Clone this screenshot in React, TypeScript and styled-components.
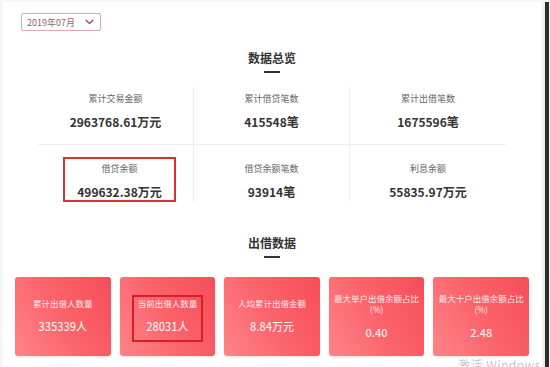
import React from 'react';
import styled, { createGlobalStyle } from 'styled-components';

const GlobalStyle = createGlobalStyle`
  html, body {
    margin: 0;
    padding: 0;
    background: #f6f6f6;
    font-family: "Noto Sans CJK SC", "Noto Sans", sans-serif;
  }
`;

const Page = styled.div`
  display: flex;
  width: 550px;
  height: 367px;
  overflow: hidden;
  position: relative;
  padding-top: 2px;
  box-sizing: border-box;
`;

const Main = styled.div`
  margin-left: 3px;
  width: 538px;
  background: #fff;
  padding: 11px 12px 0;
  box-sizing: border-box;
  display: flex;
  flex-direction: column;
`;

const Shade = styled.div`
  width: 4px;
  background: linear-gradient(90deg, #fafafa, #e6e6e6);
`;

const Edge = styled.div`
  width: 4px;
  background: #2c2c2c;
`;

const Select = styled.div`
  margin-left: 6px;
  width: 80px;
  height: 18px;
  box-sizing: border-box;
  border: 1px solid #d8a9b0;
  border-radius: 2px;
  display: flex;
  align-items: center;
  justify-content: space-between;
  padding: 0 6px 0 5px;
  font-size: 9px;
  color: #9a5f68;
`;

const Heading = styled.div`
  display: flex;
  flex-direction: column;
  align-items: center;
  margin-top: ${(p: { top: number }) => p.top}px;
`;

const HeadingText = styled.div`
  font-size: 12px;
  line-height: 14px;
  font-weight: 700;
  color: #333;
`;

const HeadingBar = styled.div`
  margin-top: 6px;
  width: 16px;
  height: 2px;
  background: #333;
`;

const StatGrid = styled.div`
  width: 468px;
  margin: 14px auto 0;
  display: grid;
  grid-template-columns: repeat(3, 1fr);
`;

const StatCell = styled.div<{ row: number; last: boolean }>`
  display: flex;
  justify-content: center;
  padding-top: ${(p) => (p.row === 0 ? 0 : 12)}px;
  padding-bottom: ${(p) => (p.row === 0 ? 12 : 0)}px;
  border-bottom: ${(p) => (p.row === 0 ? '1px solid #eeeeee' : 'none')};
  border-right: ${(p) => (p.last ? 'none' : '1px solid #eeeeee')};
`;

const StatBox = styled.div<{ marked?: boolean }>`
  display: flex;
  flex-direction: column;
  align-items: center;
  box-sizing: border-box;
  min-width: ${(p) => (p.marked ? '111px' : '0')};
  padding: 4px 12px 1px;
  border: 2px solid ${(p) => (p.marked ? '#d8312f' : 'transparent')};
  margin-left: ${(p) => (p.marked ? '8px' : '0')};
`;

const StatLabel = styled.div`
  font-size: 9px;
  line-height: 12px;
  color: #666;
`;

const StatValue = styled.div`
  margin-top: 10px;
  font-size: 12px;
  line-height: 14px;
  font-weight: 700;
  color: #333;
`;

const CardRow = styled.div`
  margin-top: 19px;
  display: grid;
  grid-template-columns: repeat(5, 1fr);
  gap: 9px;
`;

const Card = styled.div`
  height: 79px;
  border-radius: 3px;
  background: linear-gradient(60deg, #ff8489 0%, #fb636b 50%, #f64d59 100%);
  box-shadow: 0 1px 2px rgba(200, 60, 70, 0.15);
  display: flex;
  align-items: center;
  justify-content: center;
  padding-top: 4px;
  box-sizing: border-box;
`;

const CardInner = styled.div<{ marked?: boolean }>`
  display: flex;
  flex-direction: column;
  align-items: center;
  box-sizing: border-box;
  min-width: ${(p) => (p.marked ? '71px' : '0')};
  padding: 1px 3px 7px;
  border: 2px solid ${(p) => (p.marked ? '#d61f27' : 'transparent')};
  color: #ffe9eb;
`;

const CardLabel = styled.div`
  font-size: 8.5px;
  line-height: 11px;
  text-align: center;
`;

const CardValue = styled.div`
  margin-top: 11px;
  font-size: 11px;
  line-height: 13px;
  font-weight: 500;
`;

const Watermark = styled.div`
  position: absolute;
  left: 458px;
  top: 356px;
  font-family: "Noto Sans CJK SC", "Noto Sans", sans-serif;
  font-size: 12px;
  color: #c9c9c9;
  letter-spacing: 0.5px;
`;

const stats = [
  { label: '累计交易金额', value: '2963768.61万元' },
  { label: '累计借贷笔数', value: '415548笔' },
  { label: '累计出借笔数', value: '1675596笔' },
  { label: '借贷余额', value: '499632.38万元', marked: true },
  { label: '借贷余额笔数', value: '93914笔' },
  { label: '利息余额', value: '55835.97万元' },
];

const cards = [
  { label: ['累计出借人数量'], value: '335339人' },
  { label: ['当前出借人数量'], value: '28031人', marked: true },
  { label: ['人均累计出借金额'], value: '8.84万元' },
  { label: ['最大单户出借余额占比', '(%)'], value: '0.40' },
  { label: ['最大十户出借余额占比', '(%)'], value: '2.48' },
];

const Chevron = () => (
  <svg width="9" height="6" viewBox="0 0 9 6">
    <polyline points="1,1.2 4.5,4.5 8,1.2" fill="none" stroke="#c0465a" strokeWidth="1.4" strokeLinecap="round" strokeLinejoin="round" />
  </svg>
);

const App: React.FC = () => {
  return (
    <>
      <GlobalStyle />
      <Page>
        <Main>
          <Select>
            <span>2019年07月</span>
            <Chevron />
          </Select>

          <Heading top={20}>
            <HeadingText>数据总览</HeadingText>
            <HeadingBar />
          </Heading>

          <StatGrid>
            {stats.map((s, i) => (
              <StatCell key={s.label} row={Math.floor(i / 3)} last={i % 3 === 2}>
                <StatBox marked={s.marked}>
                  <StatLabel>{s.label}</StatLabel>
                  <StatValue>{s.value}</StatValue>
                </StatBox>
              </StatCell>
            ))}
          </StatGrid>

          <Heading top={34}>
            <HeadingText>出借数据</HeadingText>
            <HeadingBar />
          </Heading>

          <CardRow>
            {cards.map((c) => (
              <Card key={c.label[0]}>
                <CardInner marked={c.marked}>
                  {c.label.map((l) => (
                    <CardLabel key={l}>{l}</CardLabel>
                  ))}
                  <CardValue>{c.value}</CardValue>
                </CardInner>
              </Card>
            ))}
          </CardRow>
        </Main>
        <Shade />
        <Edge />
        <Watermark>激活 Windows</Watermark>
      </Page>
    </>
  );
};

export default App;
